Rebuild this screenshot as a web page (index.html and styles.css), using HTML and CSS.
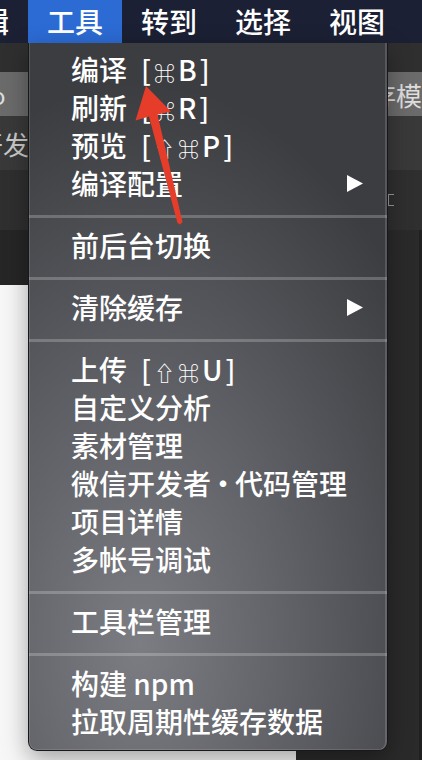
FILE: index.html
```html
<!DOCTYPE html>
<html lang="zh-CN">
<head>
    <meta charset="UTF-8">
    <meta name="viewport" content="width=device-width, initial-scale=1.0">
    <title>工具菜单</title>
    <link rel="stylesheet" href="styles.css">
</head>
<body>
    <div class="menubar">
        <span class="menu-title">编辑</span>
        <span class="menu-title active">工具</span>
        <span class="menu-title">转到</span>
        <span class="menu-title">选择</span>
        <span class="menu-title">视图</span>
    </div>

    <div class="workspace">
        <div class="strip strip-top"></div>
        <div class="strip strip-tools">
            <span class="label-left">o</span>
            <span class="label-right">缓存模式</span>
        </div>
        <div class="strip strip-tabs">
            <span class="label-tab">开发</span>
        </div>
        <div class="strip strip-bar">
            <span class="bracket"></span>
        </div>
        <div class="main">
            <div class="simulator">
                <div class="sim-head"></div>
                <div class="sim-screen"></div>
            </div>
            <div class="panel"></div>
        </div>
    </div>

    <div class="dropdown">
        <div class="item"><span>编译<span class="key">[<span class="sym">⌘</span>B]</span></span></div>
        <div class="item"><span>刷新<span class="key">[<span class="sym">⌘</span>R]</span></span></div>
        <div class="item"><span>预览<span class="key">[<span class="sym">⇧⌘</span>P]</span></span></div>
        <div class="item has-sub">编译配置
            <svg class="sub-arrow" width="16" height="17" viewBox="0 0 16 17"><polygon points="0,0 16,8.5 0,17" fill="#fff"/></svg>
        </div>
        <div class="sep"></div>
        <div class="item">前后台切换</div>
        <div class="sep"></div>
        <div class="item has-sub">清除缓存
            <svg class="sub-arrow" width="16" height="17" viewBox="0 0 16 17"><polygon points="0,0 16,8.5 0,17" fill="#fff"/></svg>
        </div>
        <div class="sep"></div>
        <div class="item"><span>上传<span class="key">[<span class="sym">⇧⌘</span>U]</span></span></div>
        <div class="item">自定义分析</div>
        <div class="item">素材管理</div>
        <div class="item"><span>微信开发者<span class="dot">·</span>代码管理</span></div>
        <div class="item">项目详情</div>
        <div class="item">多帐号调试</div>
        <div class="sep"></div>
        <div class="item">工具栏管理</div>
        <div class="sep"></div>
        <div class="item">构建 npm</div>
        <div class="item">拉取周期性缓存数据</div>
    </div>

    <!-- annotation arrow pointing at 编译 -->
    <svg class="arrow" width="422" height="760" viewBox="0 0 422 760">
        <polygon points="146,86 171,111.5 157.5,114.5 182.5,222 180,224.5 177.5,223 149,116.5 135.5,120.5" fill="#e53d29"/>
    </svg>
</body>
</html>
```

FILE: styles.css
```css
body {
    margin: 0;
    width: 422px;
    height: 760px;
    overflow: hidden;
    position: relative;
    background: #2b2b2b;
    font-family: "Noto Sans CJK SC", "DejaVu Sans", sans-serif;
}
.menubar {
    display: flex;
    height: 43px;
    margin-left: -66px;
    background: #1b2034;
}
.menu-title {
    padding: 0 19px;
    line-height: 43px;
    font-size: 28px;
    font-weight: 500;
    color: #fff;
    white-space: nowrap;
}
.menu-title.active {
    background: #2c6bd4;
}
.strip {
    display: flex;
    align-items: center;
    justify-content: space-between;
    overflow: hidden;
    white-space: nowrap;
}
.strip-top {
    height: 29px;
    background: #2f2f2f;
}
.strip-tools {
    height: 44px;
    background: #6b6b6c;
    color: #dedede;
    font-size: 26px;
}
.label-left {
    margin-left: -9px;
    font-size: 24px;
}
.label-right {
    margin-right: -26px;
}
.strip-tabs {
    height: 54px;
    background: #393939;
    color: #c9c9c9;
    font-size: 26px;
}
.label-tab {
    margin-left: -23px;
}
.strip-bar {
    height: 60px;
    background: #2f2f2f;
    justify-content: flex-end;
}
.bracket {
    width: 5px;
    height: 10px;
    margin-right: 28px;
    border: 1px solid #9a9a9a;
    border-right: none;
}
.main {
    display: flex;
    height: 530px;
}
.simulator {
    width: 296px;
    display: flex;
    flex-direction: column;
}
.sim-head {
    height: 55px;
    background: #262626;
}
.sim-screen {
    flex: 1;
    background: #f7f7f7;
}
.panel {
    flex: 1;
    background: #2a2a2a;
    border-right: 3px solid #202020;
}
.dropdown {
    position: absolute;
    top: 43px;
    left: 28px;
    width: 358px;
    height: 700px;
    padding: 7px 0 0;
    border: 1px solid #18181a;
    border-top: none;
    border-radius: 0 0 9px 9px;
    background: radial-gradient(ellipse 340px 560px at 110px 600px, #7c7d82 0%, #606166 45%, #3c3d41 100%);
    box-shadow: inset 1px 0 0 rgba(255,255,255,0.14), inset -2px 0 0 rgba(255,255,255,0.14), inset 0 -1px 0 rgba(255,255,255,0.12), 0 8px 24px rgba(0,0,0,0.35);
}
.item {
    display: flex;
    align-items: center;
    justify-content: space-between;
    height: 38px;
    padding: 0 24px 0 42px;
    font-size: 28px;
    font-weight: 500;
    color: #fff;
    white-space: nowrap;
}
.key {
    margin-left: 14px;
    letter-spacing: 3px;
}
.sym {
    font-size: 21px;
    font-weight: 400;
}
.dot {
    margin: 0 -2px;
}
.sep {
    height: 3px;
    margin: 13px 0 8px;
    background: rgba(255,255,255,0.22);
}
.arrow {
    position: absolute;
    top: 0;
    left: 0;
    pointer-events: none;
}
```
